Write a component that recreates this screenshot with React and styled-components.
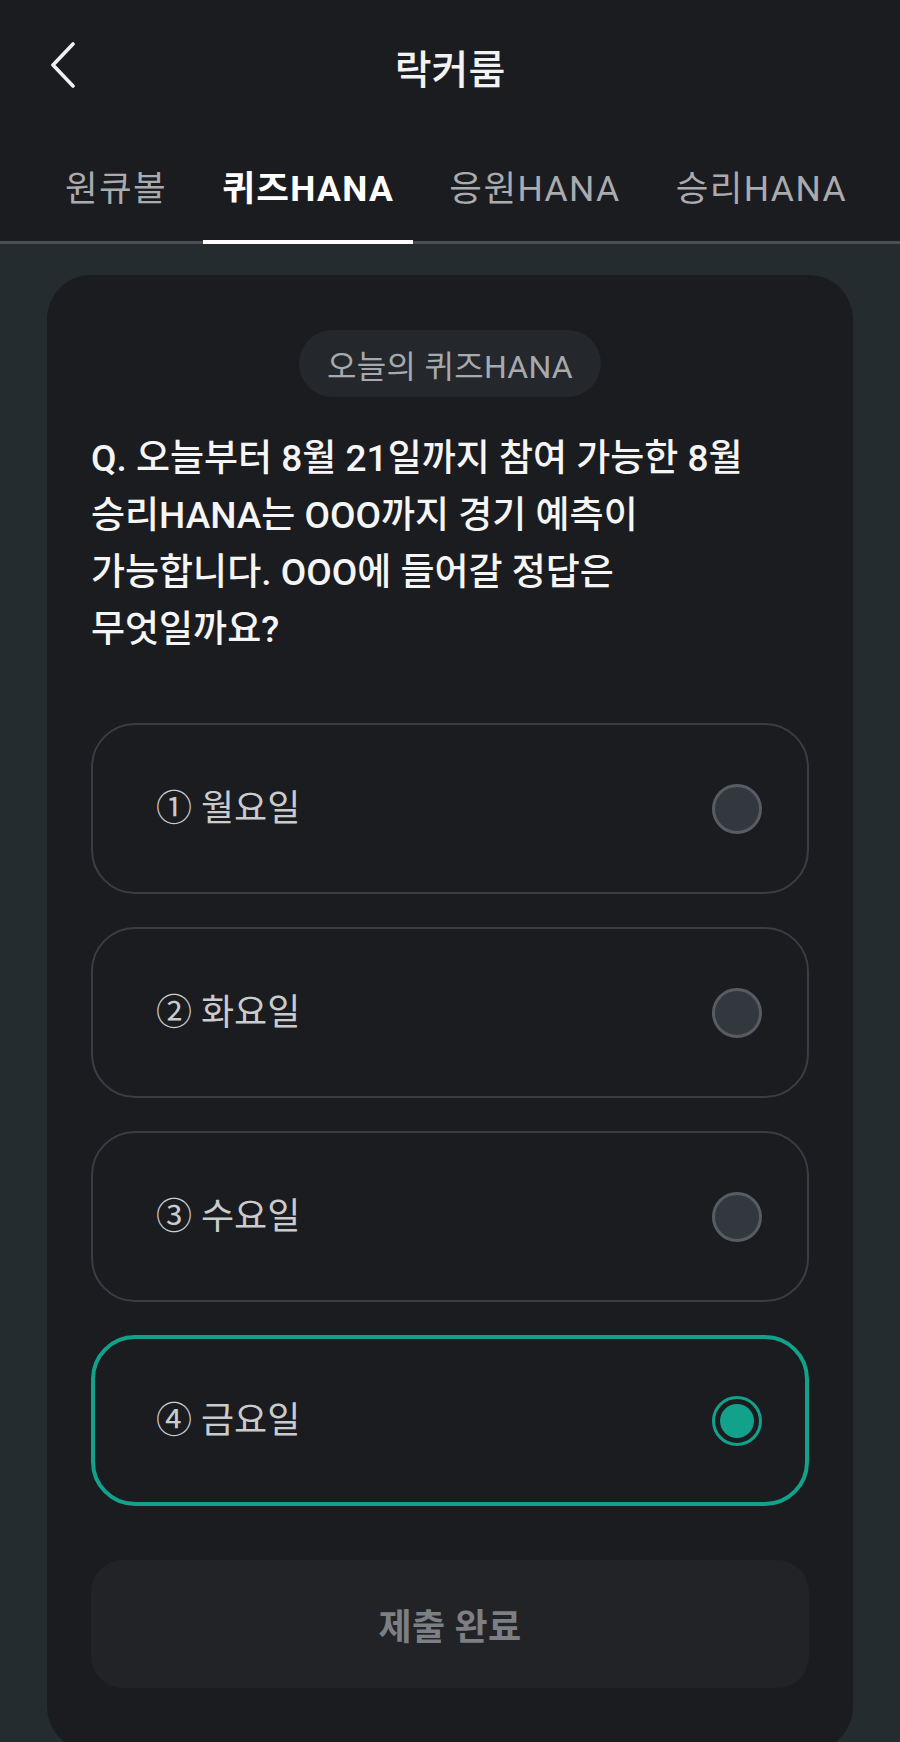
import React, { useState } from "react";
import styled, { createGlobalStyle } from "styled-components";

const GlobalStyle = createGlobalStyle`
  html, body {
    margin: 0;
    padding: 0;
    background: #252c2f;
    overflow: hidden;
  }
  #root {
    height: 1742px;
    overflow: hidden;
  }
  * { box-sizing: border-box; }
`;

const FONT = `Roboto, "Noto Sans CJK KR", "Noto Sans", sans-serif`;

const Page = styled.div`
  width: 900px;
  height: 1742px;
  background: #252c2f;
  font-family: ${FONT};
  display: flex;
  flex-direction: column;
  overflow: hidden;
`;

const Header = styled.header`
  background: #1b1c1f;
  display: flex;
  flex-direction: column;
`;

const TopBar = styled.div`
  height: 130px;
  display: grid;
  grid-template-columns: 130px 1fr 130px;
  align-items: center;
`;

const BackButton = styled.button`
  background: none;
  border: none;
  padding: 0 0 0 50px;
  margin: 0;
  height: 60px;
  display: flex;
  align-items: center;
  cursor: pointer;
`;

const Title = styled.h1`
  margin: 0;
  padding-top: 12px;
  text-align: center;
  color: #f2f2f3;
  font-size: 40px;
  font-weight: 500;
  line-height: 1;
`;

const TabBar = styled.nav`
  height: 114px;
  display: flex;
  align-items: stretch;
  gap: 17px;
  padding-left: 46px;
  border-bottom: 3px solid #4a5055;
`;

const Tab = styled.button`
  background: none;
  border: none;
  margin: 0 0 -3px 0;
  padding: 9px 19px 0;
  font-family: ${FONT};
  font-size: 35.5px;
  letter-spacing: 1.4px;
  line-height: 1;
  font-weight: ${(p) => (p.$active ? 700 : 400)};
  color: ${(p) => (p.$active ? "#ffffff" : "#a9abaf")};
  border-bottom: 4px solid ${(p) => (p.$active ? "#ffffff" : "transparent")};
  display: flex;
  align-items: center;
  white-space: nowrap;
  cursor: pointer;
`;

const Content = styled.main`
  flex: 1;
  padding: 31px 47px 0;
  display: flex;
  flex-direction: column;
`;

const Card = styled.section`
  background: #1b1c1f;
  border-radius: 44px;
  padding: 55px 44px 60px;
  min-height: 1476px;
  display: flex;
  flex-direction: column;
`;

const Pill = styled.div`
  align-self: center;
  height: 67px;
  padding: 0 28px;
  border-radius: 34px;
  background: #24272b;
  color: #a6aaaf;
  font-size: 32px;
  letter-spacing: 0.3px;
  display: flex;
  align-items: center;
  white-space: nowrap;
`;

const Question = styled.p`
  margin: 33px 0 0;
  color: #f5f5f6;
  font-size: 37px;
  font-weight: 500;
  line-height: 57px;
  white-space: nowrap;
`;

const Options = styled.div`
  margin-top: 65px;
  display: flex;
  flex-direction: column;
  gap: 33px;
`;

const Option = styled.button`
  height: 171px;
  width: 100%;
  border-radius: 44px;
  background: #1b1c1f;
  border: ${(p) => (p.$selected ? "4px solid #12a28b" : "2px solid #3a3d43")};
  padding: 0 ${(p) => (p.$selected ? 43 : 45)}px 0 ${(p) => (p.$selected ? 61 : 63)}px;
  display: flex;
  align-items: center;
  justify-content: space-between;
  cursor: pointer;
  font-family: ${FONT};
`;

const OptionLabel = styled.span`
  color: #cacbcd;
  font-size: 36px;
  line-height: 1;
  white-space: nowrap;
`;

const Radio = styled.span`
  width: 50px;
  height: 50px;
  border-radius: 50%;
  border: 3px solid ${(p) => (p.$selected ? "#12a28b" : "#575c64")};
  background: ${(p) => (p.$selected ? "#1b1c1f" : "#33373e")};
  display: flex;
  align-items: center;
  justify-content: center;
  flex-shrink: 0;
`;

const RadioDot = styled.span`
  width: 34px;
  height: 34px;
  border-radius: 50%;
  background: #12a28b;
`;

const SubmitButton = styled.button`
  margin-top: 54px;
  height: 128px;
  width: 100%;
  border: none;
  border-radius: 32px;
  background: #222326;
  color: #7c7f84;
  font-family: ${FONT};
  font-size: 36px;
  font-weight: 700;
  letter-spacing: 0.3px;
  cursor: default;
`;

const tabs = ["원큐볼", "퀴즈HANA", "응원HANA", "승리HANA"];
const options = ["① 월요일", "② 화요일", "③ 수요일", "④ 금요일"];

export default function App() {
  const [selected, setSelected] = useState(3);
  return (
    <>
      <GlobalStyle />
      <Page>
        <Header>
          <TopBar>
            <BackButton aria-label="뒤로">
              <svg width="26" height="46" viewBox="0 0 26 46" fill="none">
                <path
                  d="M23 2 L3 23 L23 44"
                  stroke="#f0f0f1"
                  strokeWidth="3.6"
                  strokeLinecap="round"
                  strokeLinejoin="round"
                />
              </svg>
            </BackButton>
            <Title>락커룸</Title>
            <div />
          </TopBar>
          <TabBar>
            {tabs.map((t, i) => (
              <Tab key={t} $active={i === 1}>
                {t}
              </Tab>
            ))}
          </TabBar>
        </Header>
        <Content>
          <Card>
            <Pill>오늘의 퀴즈HANA</Pill>
            <Question>
              Q. 오늘부터 8월 21일까지 참여 가능한 8월
              <br />
              승리HANA는 OOO까지 경기 예측이
              <br />
              가능합니다. OOO에 들어갈 정답은
              <br />
              무엇일까요?
            </Question>
            <Options>
              {options.map((o, i) => (
                <Option
                  key={o}
                  $selected={i === selected}
                  onClick={() => setSelected(i)}
                >
                  <OptionLabel>{o}</OptionLabel>
                  <Radio $selected={i === selected}>
                    {i === selected && <RadioDot />}
                  </Radio>
                </Option>
              ))}
            </Options>
            <SubmitButton>제출 완료</SubmitButton>
          </Card>
        </Content>
      </Page>
    </>
  );
}
